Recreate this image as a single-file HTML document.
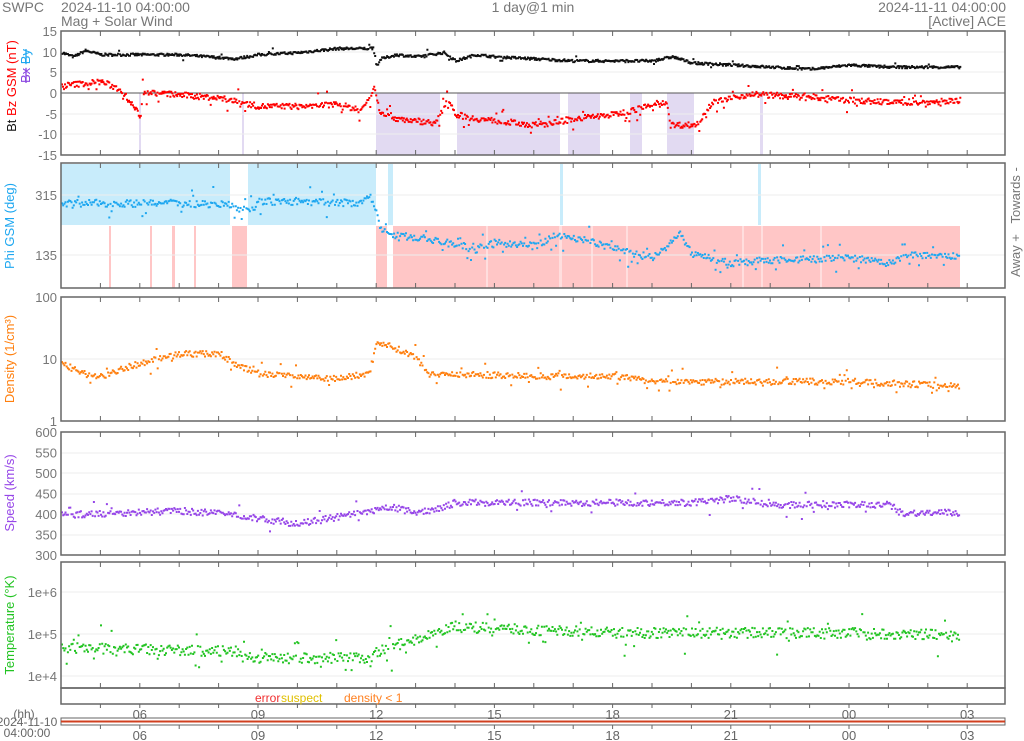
<!DOCTYPE html>
<html><head><meta charset="utf-8"><style>
html,body{margin:0;padding:0;background:#fff;width:1024px;height:741px;overflow:hidden}
svg{display:block;font-family:"Liberation Sans",sans-serif}
</style></head><body>
<svg id="s" width="1024" height="741" xmlns="http://www.w3.org/2000/svg">
<text x="2" y="12" font-size="14" fill="#777">SWPC</text>
<text x="61" y="12" font-size="14" fill="#777">2024-11-10 04:00:00</text>
<text x="61" y="26" font-size="14" fill="#777">Mag + Solar Wind</text>
<text x="533" y="12" font-size="14" fill="#777" text-anchor="middle">1 day@1 min</text>
<text x="1006" y="12" font-size="14" fill="#777" text-anchor="end">2024-11-11 04:00:00</text>
<text x="1006" y="26" font-size="14" fill="#777" text-anchor="end">[Active] ACE</text>
<g id="g"></g>
</svg>
<script>
var G='';var X0=61,PX=39.4;function X(c){return X0+(c-4)*PX}
var seed=7;function r(){seed=(seed*16807)%2147483647;return seed/2147483647}
function interp(k,t){for(var i=0;i<k.length-1;i++){if(t<=k[i+1][0]){var a=k[i],b=k[i+1];var f=(t-a[0])/((b[0]-a[0])||1);return a[1]+(b[1]-a[1])*f}}return k[k.length-1][1]}
function rect(x,y,w,h,c){G+='<rect x="'+x+'" y="'+y+'" width="'+w+'" height="'+h+'" fill="'+c+'"/>'}
function line(x1,y1,x2,y2,c,w){G+='<line x1="'+x1+'" y1="'+y1+'" x2="'+x2+'" y2="'+y2+'" stroke="'+c+'" stroke-width="'+(w||1)+'"/>'}
function txt(x,y,s,c,a,fs){G+='<text x="'+x+'" y="'+y+'" font-size="'+(fs||13)+'" fill="'+c+'" text-anchor="'+(a||'end')+'">'+s+'</text>'}
function vtxt(x,y,s,c,fs){G+='<text transform="translate('+x+','+y+') rotate(-90)" font-size="'+(fs||13)+'" fill="'+c+'" text-anchor="middle">'+s+'</text>'}
function pts(k,ymap,col,noise,spread,step){var p='';for(var t=4;t<26.8;t+=(step||0.025)){var v=interp(k,t)+(r()-0.5)*noise;if(r()<spread)v+=(r()-0.5)*noise*4;var y=ymap(v);p+='M'+X(t).toFixed(1)+' '+y.toFixed(1)+'h2v2h-2z'}G+='<path d="'+p+'" fill="'+col+'"/>'}
var panels=[[31,155],[163,288],[297,421],[432,555],[562,688]];
var purple=[[376,440],[457,560],[568,600],[630,642],[667,694],[139,141],[242,244],[760,763]];
purple.forEach(function(a){rect(a[0],93,a[1]-a[0],62,'#e2daf2')});
[[61,230],[248,376],[388,393],[560,563],[758,761]].forEach(function(a){rect(a[0],164,a[1]-a[0],61,'#c8ecfb')});
[[232,247],[376,387],[393,960],[109,111],[150,152],[172,175],[194,196]].forEach(function(a){rect(a[0],226,a[1]-a[0],62,'#ffc6c6')});
[[486,488],[559,562],[591,593],[626,628],[742,744],[761,763],[820,822]].forEach(function(a){rect(a[0],226,a[1]-a[0],62,'#ffdede')});
function grid(y){line(X0,y,1005,y,'#eee')}
[52,72,114,134].forEach(grid);line(X0,93,1005,93,'#555');
[195,255].forEach(grid);[359].forEach(grid);
[473,514,494,535,453].forEach(grid);[592,634,676].forEach(grid);
var BY=function(v){return 93-v*4.13};
pts([[4,10],[4.3,9],[4.6,10.5],[5,9.5],[7,9.5],[8.4,8.5],[9,9.5],[10,10],[11,11],[11.9,11],[12,7],[12.1,8.5],[12.5,9.5],[13,9],[13.7,10],[14,8],[14.5,9.5],[15,9],[17,8],[19,8],[19.5,9],[20,7.5],[21,7],[22,6.5],[23,6],[24,7],[25,6.5],[26.8,6.5]],BY,'#111',0.6,0.02);
pts([[4,2],[5,3],[5.5,1],[6,-5.5],[6.05,0.5],[8,-1],[9,-3],[10,-3],[11,-2.5],[11.6,-4],[11.95,1.5],[12.05,-4],[12.5,-6],[13,-6.5],[13.5,-7],[13.8,-1],[14,-5],[14.5,-6],[16,-7.5],[16.5,-7],[17,-6],[18,-5],[19.35,-2],[19.45,-7.5],[20.1,-7.5],[20.5,-2],[21.5,0],[24,-1.5],[25,-2],[26,-2],[26.8,-1.5]],BY,'#f00',1.4,0.1);
pts([[4,300],[8.3,297],[8.5,285],[8.9,285],[9,305],[11.5,300],[11.8,320],[12,280],[12.05,230],[12.5,205],[13,200],[14,180],[14.5,165],[15,185],[16,175],[16.5,205],[17,200],[18,170],[19,140],[19.5,190],[19.7,210],[20,150],[21,125],[22,135],[24,140],[25,125],[25.5,150],[26.8,145]],function(v){return 290-(v-45)*0.345},'#1ea7f0',20,0.15,0.03);
pts([[4,0.95],[4.5,0.78],[5,0.74],[6,0.95],[7,1.1],[8,1.1],[8.5,0.9],[9,0.78],[10,0.74],[11,0.7],[11.8,0.78],[12,1.3],[12.5,1.18],[13,1.04],[13.3,0.78],[16,0.74],[18,0.74],[19,0.65],[20,0.65],[24,0.65],[26.8,0.58]],function(v){return 421-v*62},'#ff7f0e',0.1,0.08,0.03);
pts([[4,400],[7,410],[8.5,400],[9,390],[9.5,385],[10,378],[11,395],[12,410],[12.3,420],[13,405],[13.5,415],[14,430],[16,430],[20,430],[21,440],[22,425],[25,425],[25.3,405],[26.8,405]],function(v){return 555-(v-300)*0.41},'#9646e8',16,0.05,0.03);
pts([[4,4.7],[8.5,4.6],[8.6,4.45],[11.8,4.45],[12,4.6],[13,4.9],[14,5.2],[15,5.15],[18,5.05],[24,5.05],[26.8,5.0]],function(v){return 676-(v-4)*42},'#22c422',0.25,0.1,0.03);
panels.forEach(function(p){G+='<rect x="61" y="'+p[0]+'" width="944" height="'+(p[1]-p[0])+'" fill="none" stroke="#666" stroke-width="1.5"/>';for(var h=5;h<28;h++){var x=X(h);line(x,p[0],x,p[0]+5,'#666');line(x,p[1]-5,x,p[1],'#666')}});
G+='<rect x="61" y="688" width="944" height="16" fill="none" stroke="#666" stroke-width="1.5"/>';
G+='<rect x="61" y="718" width="944" height="7" fill="none" stroke="#666"/>';
rect(61,720.5,944,2,'#d04020');
for(var h=5;h<28;h++){var x=X(h);line(x,704,x,708,'#666');line(x,725,x,729,'#666')}
['06','09','12','15','18','21','00','03'].forEach(function(s,i){var x=X(6+3*i);txt(x,719,s,'#666','middle',13);txt(x,740,s,'#666','middle',13)});
txt(24,718,'(hh)','#666','middle',12);txt(27,726,'2024-11-10','#666','middle',12);txt(27,737,'04:00:00','#666','middle',12);
txt(255,702,'error','#f03030','start',12);txt(281,702,'suspect','#e0c000','start',12);txt(344,702,'density &lt; 1','#ff8020','start',12);
[[15,31],[10,52],[5,72],[0,93],[-5,114],[-10,134],[-15,155]].forEach(function(a){txt(57,a[1]+5,a[0],'#777')});
txt(57,200,'315','#777');txt(57,260,'135','#777');
txt(57,302,'100','#777');txt(57,364,'10','#777');txt(57,426,'1','#777');
[600,550,500,450,400,350,300].forEach(function(v){txt(57,555-(v-300)*0.41+5,v,'#777')});
txt(57,597,'1e+6','#777');txt(57,639,'1e+5','#777');txt(57,681,'1e+4','#777');
vtxt(16,86,'<tspan fill="#111">Bt</tspan>  <tspan fill="#f00">Bz GSM (nT)</tspan>','#f00',13);
vtxt(30,66,'<tspan fill="#8a46e0" text-decoration="line-through">Bx</tspan> <tspan fill="#1ea7f0" text-decoration="line-through">By</tspan>','#888',13);
vtxt(14,226,'Phi GSM (deg)','#1ea7f0');vtxt(14,359,'Density (1/cm³)','#ff7f0e');vtxt(14,493,'Speed (km/s)','#9646e8');vtxt(14,625,'Temperature (°K)','#22c422');
vtxt(1020,222,'Away +&#160;&#160; Towards -','#777',13);
document.getElementById('g').innerHTML=G;
</script>
</body></html>
